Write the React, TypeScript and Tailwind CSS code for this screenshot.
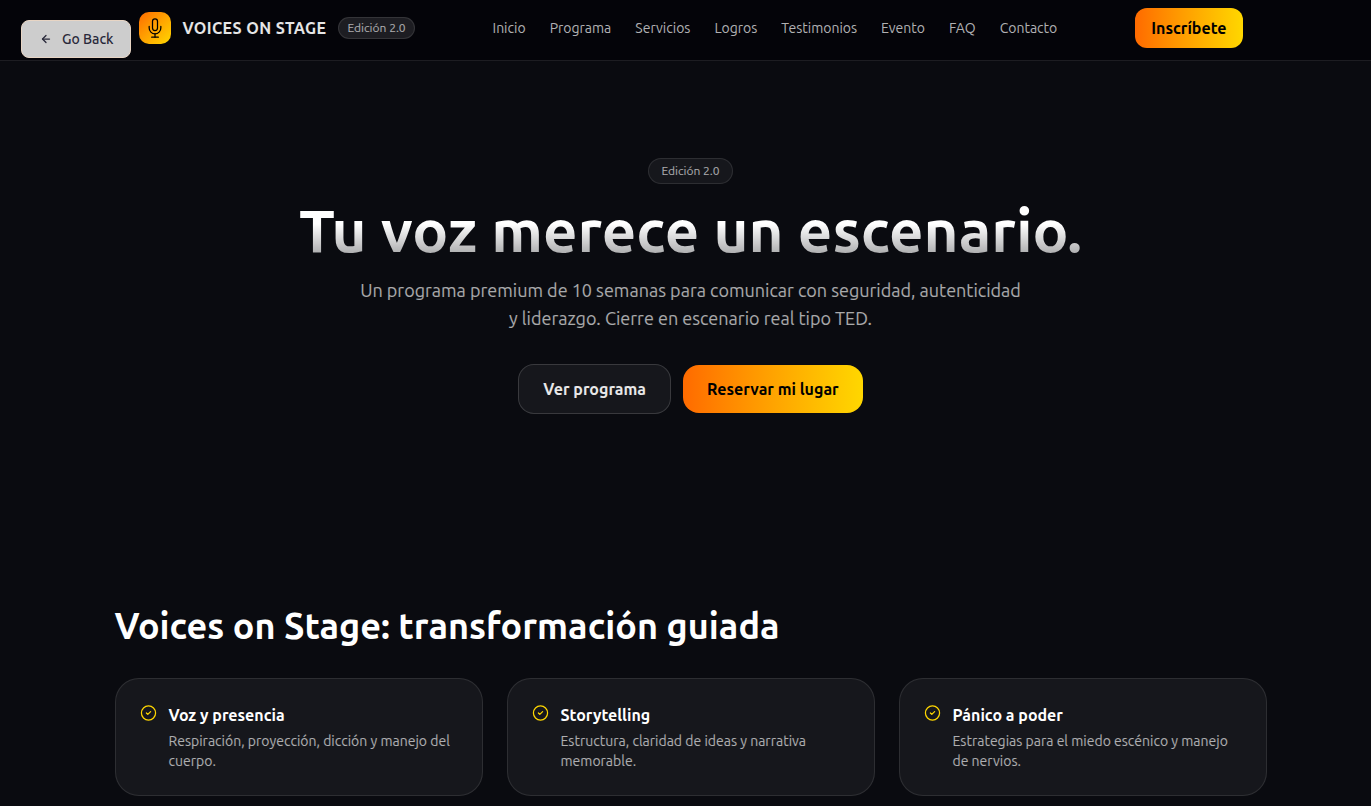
import { ArrowLeft, CircleCheck } from "lucide-react";
import { FiMic } from "react-icons/fi";

const links = [
  ["Inicio", "#inicio"],
  ["Programa", "#programa"],
  ["Servicios", "#servicios"],
  ["Logros", "#logros"],
  ["Testimonios", "#testimonios"],
  ["Evento", "#evento"],
  ["FAQ", "#faq"],
  ["Contacto", "#contacto"],
];

const features = [
  { title: "Voz y presencia", text: "Respiración, proyección, dicción y manejo del cuerpo." },
  { title: "Storytelling", text: "Estructura, claridad de ideas y narrativa memorable." },
  { title: "Pánico a poder", text: "Estrategias para el miedo escénico y manejo de nervios." },
];

function Header() {
  return (
    <header className="border-b border-white/10 bg-[#040409] pl-[10px]">
      <div className="mx-auto flex max-w-6xl items-center justify-between px-6 pt-2 pb-3">
        <a href="#inicio" className="flex items-center gap-3">
          <span className="flex size-8 items-center justify-center rounded-[10px] bg-linear-to-br from-[#ff6a00] to-[#ffd700] text-black">
            <FiMic className="size-5" strokeWidth={1.5} />
          </span>
          <span className="font-semibold tracking-wide text-white/90">VOICES ON STAGE</span>
          <span className="rounded-full border border-white/10 bg-white/10 px-2 py-0.5 text-xs text-white/65">
            Edición 2.0
          </span>
        </a>
        <nav className="flex items-center gap-6 text-sm text-white/70">
          {links.map(([label, href]) => (
            <a key={href} href={href}>
              {label}
            </a>
          ))}
        </nav>
        <button type="button" className="rounded-xl bg-linear-to-r from-[#ff6a00] to-[#ffd700] px-4 py-2 font-semibold text-black">
          Inscríbete
        </button>
      </div>
    </header>
  );
}

function Hero() {
  return (
    <section id="inicio" className="mx-auto flex max-w-4xl flex-col items-center pt-[97px] pb-24 text-center">
      <span className="rounded-full border border-white/10 bg-white/5 px-3 py-1 text-xs text-white/65">
        Edición 2.0
      </span>
      <h1 className="mt-4 bg-linear-to-b from-white from-40% to-white/60 bg-clip-text text-6xl font-bold text-transparent">
        Tu voz merece un escenario.
      </h1>
      <p className="mt-4 max-w-2xl text-lg text-white/65">
        Un programa premium de 10 semanas para comunicar con seguridad, autenticidad y liderazgo. Cierre en escenario
        real tipo TED.
      </p>
      <div className="mt-8 flex items-center gap-3">
        <button type="button" className="rounded-2xl border border-white/15 bg-white/5 px-6 py-3 font-semibold text-white/90">
          Ver programa
        </button>
        <button type="button" className="rounded-2xl bg-linear-to-r from-[#ff6a00] to-[#ffd700] px-6 py-3 font-semibold text-black">
          Reservar mi lugar
        </button>
      </div>
    </section>
  );
}

function Features() {
  return (
    <section id="programa" className="mx-auto max-w-6xl pt-24 pb-2">
      <h2 className="text-4xl font-semibold">Voices on Stage: transformación guiada</h2>
      <div className="mt-8 grid grid-cols-3 gap-6">
        {features.map((feature) => (
          <article key={feature.title} className="flex items-start gap-3 rounded-3xl border border-white/10 bg-white/5 p-6">
            <CircleCheck className="h-5 w-[17px] shrink-0 text-[#ffd700]" strokeWidth={1.75} />
            <div>
              <h3 className="font-semibold">{feature.title}</h3>
              <p className="mt-1 text-sm text-white/65">{feature.text}</p>
            </div>
          </article>
        ))}
      </div>
    </section>
  );
}

export default function App() {
  return (
    <div className="min-h-screen bg-[#0a0b10] font-['Ubuntu','Noto_Sans',sans-serif] text-white">
      <button
        type="button"
        className="fixed top-5 left-[21px] z-10 flex items-center gap-2 rounded-lg border border-[#e8d5c4] bg-[#cdcdcd] px-4 py-2 text-sm font-medium text-[#29293a]"
      >
        <span className="flex size-4 items-center justify-center">
          <ArrowLeft className="size-3" strokeWidth={2.5} />
        </span>
        Go Back
      </button>
      <Header />
      <main className="pl-[10px]">
        <Hero />
        <Features />
      </main>
    </div>
  );
}
